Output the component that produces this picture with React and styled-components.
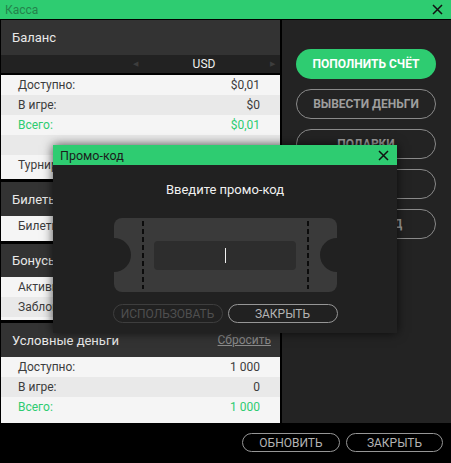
import React from "react";
import styled, { createGlobalStyle } from "styled-components";

const Global = createGlobalStyle`
  html, body { margin: 0; padding: 0; background: #000; }
  body { font-family: Roboto, "Noto Sans", "Liberation Sans", sans-serif; }
  * { box-sizing: border-box; }
`;

const Window = styled.div`
  position: relative;
  width: 451px;
  height: 463px;
  background: #000;
  display: flex;
  flex-direction: column;
  overflow: hidden;
`;

const TitleBar = styled.div`
  flex: none;
  height: ${(p) => p.$h || 19}px;
  background: #2ecc71;
  display: flex;
  align-items: center;
  justify-content: space-between;
  padding: 0 8px 0 ${(p) => p.$pl || 5}px;
  margin-bottom: ${(p) => p.$mb || 0}px;
`;

const TitleText = styled.span`
  font-size: ${(p) => p.$size || 12}px;
  color: ${(p) => (p.$dark ? "#1c1c1c" : "#24834c")};
`;

const CloseIcon = () => (
  <svg width="11" height="11" viewBox="0 0 11 11">
    <path d="M1 1 L10 10 M10 1 L1 10" stroke="#111" strokeWidth="1.5" fill="none" />
  </svg>
);

const Main = styled.div`
  flex: 1;
  display: flex;
  min-height: 0;
`;

const LeftColumn = styled.div`
  width: 279px;
  margin-left: 1px;
  display: flex;
  flex-direction: column;
  gap: 3px;
`;

const Section = styled.div`
  display: flex;
  flex-direction: column;
  flex: ${(p) => (p.$grow ? 1 : "none")};
`;

const SectionHeader = styled.div`
  height: ${(p) => p.$h || 34}px;
  background: #333;
  display: flex;
  align-items: center;
  justify-content: space-between;
  padding: 0 9px 0 11px;
  font-size: 13px;
  color: #e8e8e8;
`;

const ResetLink = styled.span`
  font-size: 12px;
  color: #8a8a8a;
  text-decoration: underline;
`;

const CurrencyBar = styled.div`
  height: 20px;
  background: #222;
  border-bottom: 2px solid #000;
  display: flex;
  justify-content: flex-end;
  padding-right: 5px;
`;

const CurrencySelector = styled.div`
  width: 142px;
  display: flex;
  align-items: center;
  justify-content: space-between;
  font-size: 12px;
  color: #f0f0f0;
`;

const Arrow = styled.span`
  font-size: 7px;
  color: #3d3d3d;
`;

const SectionBody = styled.div`
  background: #f5f5f5;
  padding-bottom: ${(p) => p.$pb || 0}px;
  flex: 1;
`;

const Row = styled.div`
  height: 20px;
  background: ${(p) => (p.$alt ? "#e9e9e9" : "#f5f5f5")};
  display: flex;
  align-items: center;
  justify-content: space-between;
  padding: 0 20px 0 17px;
  font-size: 12px;
  color: ${(p) => (p.$green ? "#2ecc71" : "#3c3c3c")};
  white-space: nowrap;
`;

const RightPanel = styled.div`
  width: 169px;
  margin-left: 2px;
  background: #232323;
  padding: 29px 15px 0 14px;
  display: flex;
  flex-direction: column;
  gap: 10px;
`;

const PillButton = styled.div`
  height: 30px;
  border-radius: 15px;
  display: flex;
  align-items: center;
  justify-content: center;
  font-size: 12px;
  font-weight: 700;
  text-transform: uppercase;
  background: ${(p) => (p.$primary ? "#2ecc71" : "transparent")};
  color: ${(p) => (p.$primary ? "#fff" : "#9e9e9e")};
  border: ${(p) => (p.$primary ? "none" : "1px solid #8a8a8a")};
`;

const BottomBar = styled.div`
  flex: none;
  height: 40px;
  display: flex;
  justify-content: flex-end;
  align-items: flex-start;
  gap: 6px;
  padding: 10px 8px 0 0;
`;

const OutlineButton = styled.div`
  width: ${(p) => p.$w || 98}px;
  height: 19px;
  border-radius: 10px;
  border: 1px solid ${(p) => (p.$disabled ? "#3e3e3e" : "#969696")};
  color: ${(p) => (p.$disabled ? "#4f4f4f" : "#b4b4b4")};
  font-size: 12px;
  display: flex;
  align-items: center;
  justify-content: center;
  text-transform: uppercase;
`;

const Modal = styled.div`
  position: absolute;
  left: 53px;
  top: 145px;
  width: 344px;
  background: #212121;
  box-shadow: 0 0 10px rgba(0, 0, 0, 0.7);
  display: flex;
  flex-direction: column;
`;

const ModalBody = styled.div`
  padding: 16px 0 10px;
  display: flex;
  flex-direction: column;
  align-items: center;
`;

const Prompt = styled.div`
  font-size: 13px;
  color: #f0f0f0;
  height: 17px;
  line-height: 17px;
  margin-bottom: 20px;
`;

const Ticket = styled.div`
  position: relative;
  width: 223px;
  height: 74px;
  background: #3a3a3a;
  border-radius: 8px;
  display: flex;
  align-items: center;
  overflow: hidden;
  &::before,
  &::after {
    content: "";
    position: absolute;
    top: 20px;
    width: 34px;
    height: 34px;
    border-radius: 50%;
    background: #212121;
  }
  &::before { left: -17px; }
  &::after { right: -17px; }
`;

const Stub = styled.div`
  width: 28px;
  flex: none;
`;

const Perforation = styled.div`
  width: 2px;
  align-self: stretch;
  margin: 3px 0;
  background: repeating-linear-gradient(to bottom, #0c0c0c 0 5px, transparent 5px 8px);
`;

const TicketCenter = styled.div`
  flex: 1;
  display: flex;
  justify-content: center;
  align-items: center;
`;

const CodeInput = styled.div`
  width: 142px;
  height: 29px;
  background: #2d2d2d;
  border-radius: 4px;
  display: flex;
  align-items: center;
  justify-content: center;
`;

const Caret = styled.span`
  width: 1px;
  height: 15px;
  background: #f0f0f0;
`;

const ModalButtons = styled.div`
  display: flex;
  gap: 5px;
  margin-top: 12px;
`;

export default function App() {
  return (
    <>
      <Global />
      <Window>
        <TitleBar $mb={1}>
          <TitleText>Касса</TitleText>
          <CloseIcon />
        </TitleBar>
        <Main>
          <LeftColumn>
            <Section>
              <SectionHeader $h={35}>Баланс</SectionHeader>
              <CurrencyBar>
                <CurrencySelector>
                  <Arrow>◀</Arrow>
                  <span>USD</span>
                  <Arrow>▶</Arrow>
                </CurrencySelector>
              </CurrencyBar>
              <SectionBody $pb={4}>
                <Row><span>Доступно:</span><span>$0,01</span></Row>
                <Row $alt><span>В игре:</span><span>$0</span></Row>
                <Row $green><span>Всего:</span><span>$0,01</span></Row>
                <Row $alt />
                <Row><span>Турнирные:</span><span>$0</span></Row>
              </SectionBody>
            </Section>
            <Section>
              <SectionHeader>Билеты</SectionHeader>
              <SectionBody $pb={5}>
                <Row><span>Билеты:</span><span>0</span></Row>
              </SectionBody>
            </Section>
            <Section>
              <SectionHeader $h={33}>Бонусы</SectionHeader>
              <SectionBody $pb={3}>
                <Row><span>Активные:</span><span>$0</span></Row>
                <Row $alt><span>Заблок.:</span><span>$0</span></Row>
              </SectionBody>
            </Section>
            <Section $grow>
              <SectionHeader>
                <span>Условные деньги</span>
                <ResetLink>Сбросить</ResetLink>
              </SectionHeader>
              <SectionBody>
                <Row><span>Доступно:</span><span>1 000</span></Row>
                <Row $alt><span>В игре:</span><span>0</span></Row>
                <Row $green><span>Всего:</span><span>1 000</span></Row>
              </SectionBody>
            </Section>
          </LeftColumn>
          <RightPanel>
            <PillButton $primary>Пополнить счёт</PillButton>
            <PillButton>Вывести деньги</PillButton>
            <PillButton>Подарки</PillButton>
            <PillButton>История</PillButton>
            <PillButton>Промо-код</PillButton>
          </RightPanel>
        </Main>
        <BottomBar>
          <OutlineButton $w={98}>Обновить</OutlineButton>
          <OutlineButton $w={97}>Закрыть</OutlineButton>
        </BottomBar>

        <Modal>
          <TitleBar $h={20} $pl={7}>
            <TitleText $dark $size={12.5}>Промо-код</TitleText>
            <CloseIcon />
          </TitleBar>
          <ModalBody>
            <Prompt>Введите промо-код</Prompt>
            <Ticket>
              <Stub />
              <Perforation />
              <TicketCenter>
                <CodeInput>
                  <Caret />
                </CodeInput>
              </TicketCenter>
              <Perforation />
              <Stub />
            </Ticket>
            <ModalButtons>
              <OutlineButton $w={110} $disabled>Использовать</OutlineButton>
              <OutlineButton $w={110}>Закрыть</OutlineButton>
            </ModalButtons>
          </ModalBody>
        </Modal>
      </Window>
    </>
  );
}
